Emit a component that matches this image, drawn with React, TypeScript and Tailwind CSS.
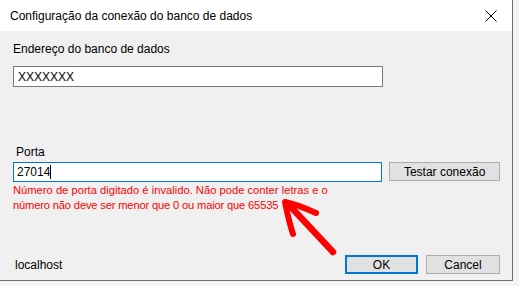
import React from "react";

export default function App() {
  const font = { fontFamily: '"Liberation Sans", Arial, sans-serif' };
  return (
    <div className="relative w-[519px] h-[286px] bg-[#f4f4f4] overflow-hidden" style={font}>
      <div className="w-[513px] h-[281px] border-r border-b border-[#6e6e6e] flex flex-col">
        <div className="h-[31px] bg-white flex items-center justify-between pl-[10px] pr-[15px] shrink-0">
          <span className="text-[12px] text-black leading-none">Configuração da conexão do banco de dados</span>
          <svg width="12" height="12" viewBox="0 0 12 12" className="mt-[1px]">
            <path d="M0.5 0.5 L11.5 11.5 M11.5 0.5 L0.5 11.5" stroke="#000" strokeWidth="1" />
          </svg>
        </div>
        <div className="flex-1 bg-[#f0f0f0] flex flex-col pl-[13px] pr-[12px] text-[12px] text-black">
          <div className="mt-[10px] leading-[16px]">Endereço do banco de dados</div>
          <div className="mt-[9px] w-[370px] h-[21px] bg-white border border-[#7a7a7a] flex items-center pl-[4px] text-[12px] leading-none">
            XXXXXXX
          </div>
          <div className="mt-[57px] ml-[3px] leading-[16px]">Porta</div>
          <div className="mt-[2px] flex items-start">
            <div className="w-[370px] h-[20px] bg-white border border-[#0078d7] flex items-center pl-[3px] text-[12px] leading-none">
              <span>27014</span>
              <span className="inline-block w-[1px] h-[14px] bg-black"></span>
            </div>
            <div className="ml-[7px] w-[111px] h-[19px] bg-[#e1e1e1] border border-[#adadad] flex items-center justify-center leading-none">
              Testar conexão
            </div>
          </div>
          <div className="mt-[1px] text-[#ff0000] text-[11.2px] leading-[15px]">
            <div>Número de porta digitado é invalido. Não pode conter letras e o</div>
            <div className="tracking-[-0.18px]">número não deve ser menor que 0 ou maior que 65535</div>
          </div>
          <div className="mt-auto mb-[6px] flex items-center">
            <span className="ml-[2px] leading-[16px]">localhost</span>
            <div className="ml-auto w-[73px] h-[19px] bg-[#e1e1e1] border-2 border-[#0078d7] flex items-center justify-center leading-none">
              OK
            </div>
            <div className="ml-[8px] w-[74px] h-[19px] bg-[#e1e1e1] border border-[#adadad] flex items-center justify-center leading-none">
              Cancel
            </div>
          </div>
        </div>
      </div>
      <svg className="absolute left-0 top-0" width="519" height="286" viewBox="0 0 519 286">
        <path d="M333 252 C318 236 303 220 290 206" stroke="#ff0000" strokeWidth="6.5" fill="none" strokeLinecap="round" />
        <path d="M316 213 C305 208 295 204 285 202 C287 212 289 222 293 234" stroke="#ff0000" strokeWidth="6" fill="none" strokeLinecap="round" strokeLinejoin="round" />
      </svg>
    </div>
  );
}
